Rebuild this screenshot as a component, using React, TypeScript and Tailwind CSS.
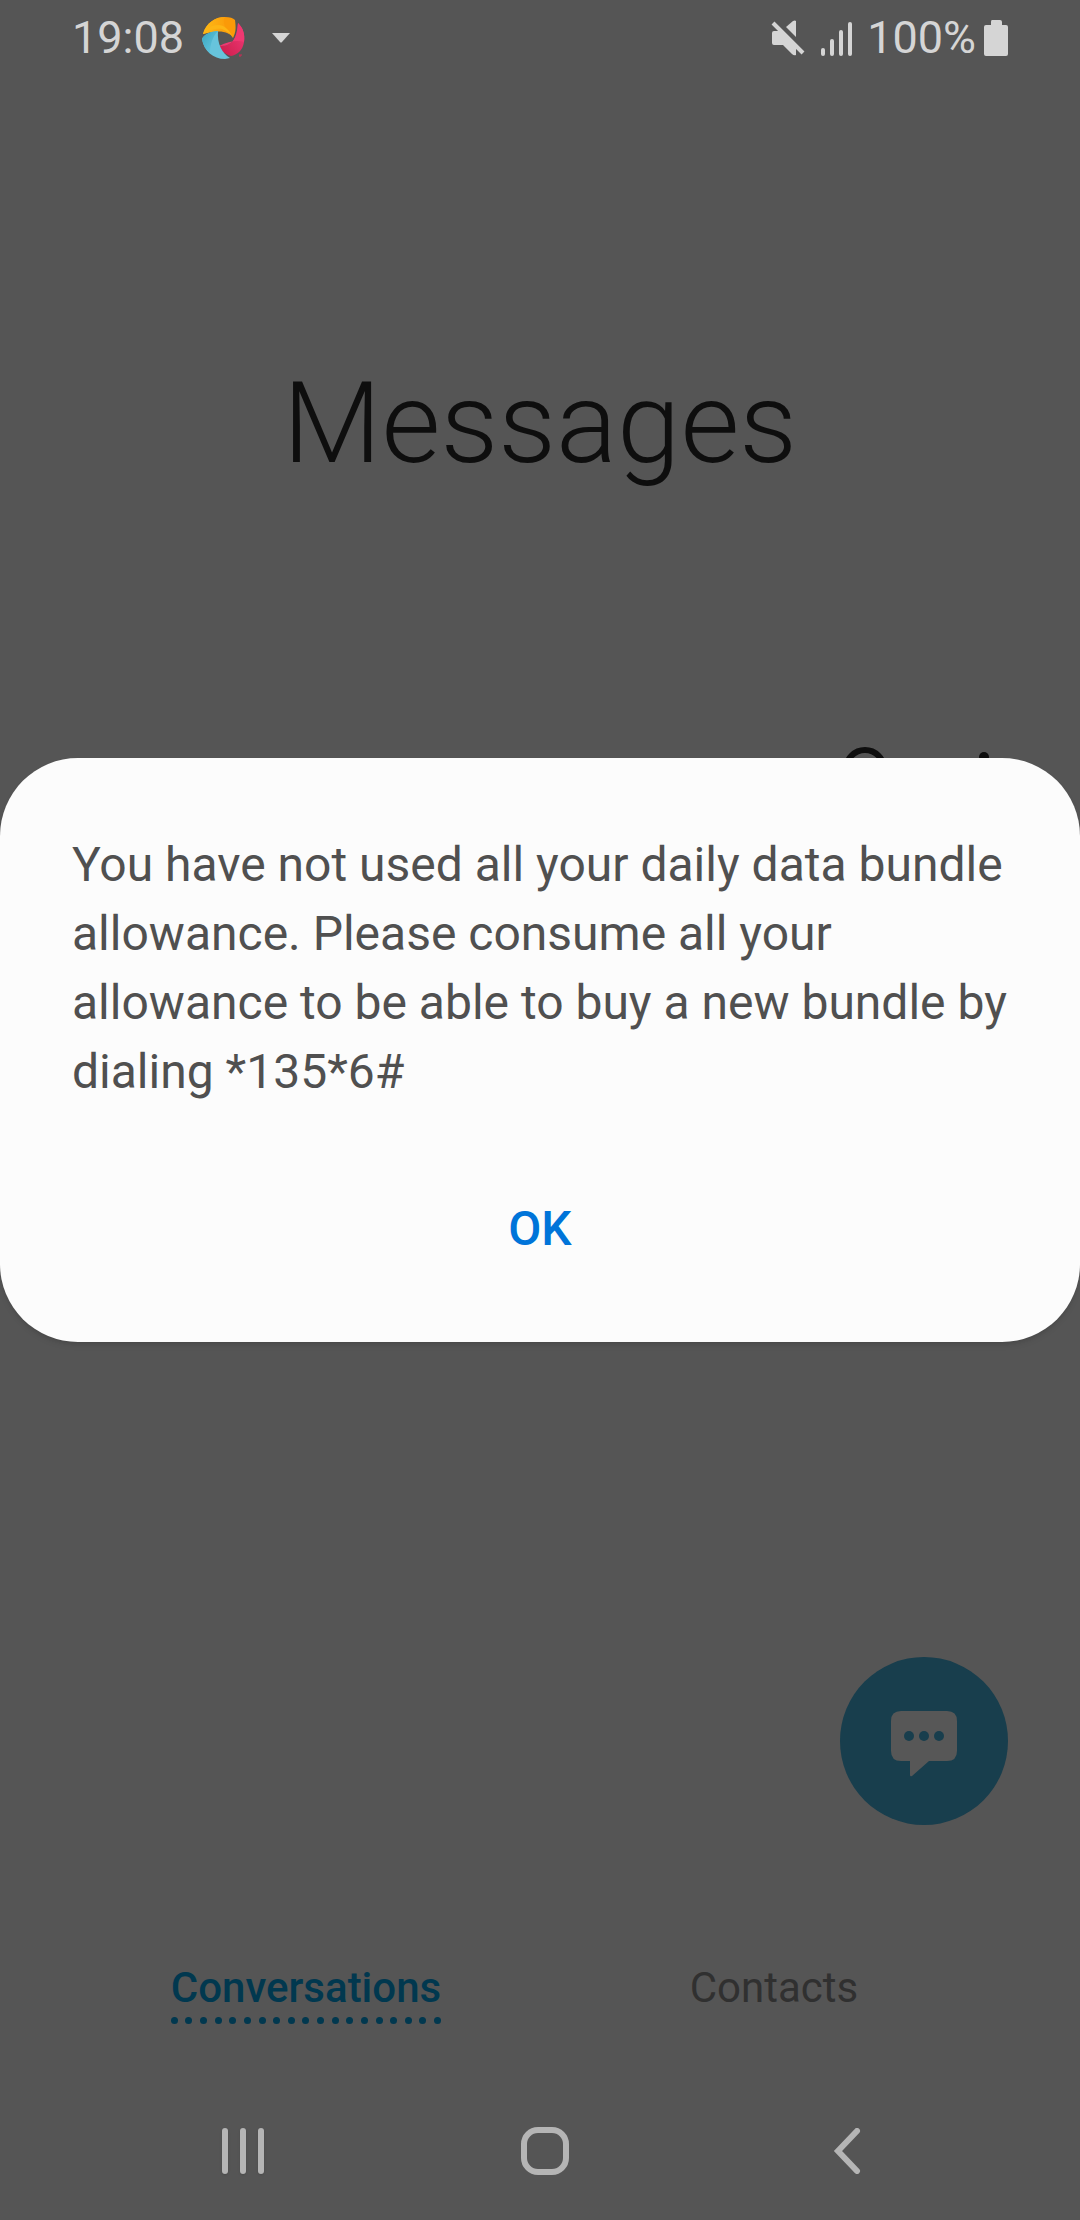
import React from 'react';

function StatusBar() {
  return (
    <header className="flex h-[76px] items-center justify-between px-[72px] text-[45px] leading-[54px] text-[#d5d5d5]">
      <div className="flex items-center">
        <span>19:08</span>
        <svg className="ml-[18px] h-[44px] w-[44px]" viewBox="0 0 44 44" aria-hidden="true">
          <defs>
            <linearGradient id="amber" x1="0" x2="1">
              <stop offset="0" stopColor="#fdbb17" />
              <stop offset="1" stopColor="#fb9608" />
            </linearGradient>
            <linearGradient id="rose" x1="0" y1="1" x2="1" y2="0">
              <stop offset="0" stopColor="#c91c48" />
              <stop offset="1" stopColor="#f33c7b" />
            </linearGradient>
            <linearGradient id="sky" x1="0" y1="0" x2="1" y2="1">
              <stop offset="0" stopColor="#39a5bf" />
              <stop offset="1" stopColor="#6bcbe4" />
            </linearGradient>
          </defs>
          <path d="M1 18C4 7 13 1 23 1C28 1 31 2 33 4C34 12 34 16 31 22C28 15 18 12 1 18Z" fill="#fb9a08" />
          <path d="M1 18C4 7 13 1 23 1C20 5 22 12 31 22C27 16 19 13 1 18Z" fill="url(#amber)" />
          <path d="M1 18C8 13 15 12 20 13C25 15 29 18 31 22C27 13 22 9 16 9C10 9 5 12 1 18Z" fill="#fdb515" />
          <path d="M36 7C41 12 43 18 42 26C41 34 35 39 29 40C23 38 19 35 17 30C30 31 35 23 36 7Z" fill="url(#rose)" />
          <path d="M36 7C41 12 43 18 42 26C36 24 27 25 17 30C30 31 35 23 36 7Z" fill="#f03871" />
          <path d="M16 15C6 16 2 19 0 23C2 35 11 43 23 43L28 42C20 37 15 28 16 15Z" fill="#67c4dc" />
          <path d="M16 15C6 16 2 19 0 23C1 29 4 34 8 37C8 28 11 20 16 15Z" fill="url(#sky)" />
          <path d="M37 39h3M38 39v2" stroke="#d32b57" fill="none" />
        </svg>
        <svg className="ml-[26px] h-[10px] w-[18px]" viewBox="0 0 18 10" aria-hidden="true">
          <path d="M0 0H18L10 9Q9 10 8 9Z" fill="#d5d5d5" />
        </svg>
      </div>
      <div className="flex items-center">
        <svg className="mr-[16px] h-[36px] w-[34px]" viewBox="0 0 34 36" fill="#d5d5d5" aria-label="Sound off">
          <path d="M3 11H11L25 25V35Q23 36 21 34L12 25H3Q1 25 1 23V13Q1 11 3 11Z" />
          <path d="M15 7L22 1Q24 0 25 1V17Z" />
          <path d="M4 1L34 31" stroke="#555" strokeWidth="3" />
          <path d="M2 3L32 33" stroke="#d5d5d5" strokeWidth="4" />
        </svg>
        <svg className="mr-[14px] h-[36px] w-[32px]" viewBox="0 0 32 36" fill="#d5d5d5" aria-label="Signal">
          <rect x="0" y="28" width="4" height="8" rx="2" />
          <rect x="9" y="19" width="4" height="17" rx="2" />
          <rect x="18" y="10" width="4" height="26" rx="2" />
          <rect x="27" y="2" width="4" height="34" rx="2" />
        </svg>
        <span>100%</span>
        <svg className="ml-[8px] h-[36px] w-[24px]" viewBox="0 0 24 36" fill="#d5d5d5" aria-label="Battery">
          <path d="M8 0H16Q18 0 18 2V5H22Q24 5 24 7V34Q24 36 22 36H2Q0 36 0 34V7Q0 5 2 5H7V2Q7 0 8 0Z" />
        </svg>
      </div>
    </header>
  );
}

function Toolbar() {
  return (
    <div className="flex justify-end pr-[48px] text-[#0e0e0e]">
      <button type="button" aria-label="Search" className="flex h-[96px] w-[136px] items-center justify-center">
        <svg className="h-[54px] w-[54px]" viewBox="0 0 54 54" fill="none" stroke="currentColor" strokeWidth="6">
          <circle cx="24" cy="22" r="19" />
          <path d="M38 36L52 50" />
        </svg>
      </button>
      <button type="button" aria-label="More options" className="flex h-[96px] w-[96px] items-center justify-center">
        <svg className="h-[46px] w-[12px]" viewBox="0 0 12 46" fill="currentColor">
          <circle cx="6" cy="6" r="5" />
          <circle cx="6" cy="23" r="5" />
          <circle cx="6" cy="40" r="5" />
        </svg>
      </button>
    </div>
  );
}

const dots = Array.from({ length: 19 }, (_, i) => i);

function Tabs() {
  return (
    <nav className="grid grid-cols-2 px-[72px] text-[42px] leading-[48px]">
      <button type="button" className="justify-self-center font-medium text-[#01384f]">
        Conversations
        <span className="mt-[5px] flex justify-between">
          {dots.map((d) => (
            <span key={d} className="h-[7px] w-[7px] rounded-full bg-[#01384f]" />
          ))}
        </span>
      </button>
      <button type="button" className="self-start justify-self-center text-[#303030]">Contacts</button>
    </nav>
  );
}

function SystemNav() {
  return (
    <footer className="grid h-[138px] grid-cols-3 place-items-center pr-[82px] pl-[92px] text-[#b5b5b5]">
      <button type="button" aria-label="Recent apps" className="flex gap-[12px]">
        <span className="h-[46px] w-[6px] rounded-full bg-current shadow-sm" />
        <span className="h-[46px] w-[6px] rounded-full bg-current shadow-sm" />
        <span className="h-[46px] w-[6px] rounded-full bg-current shadow-sm" />
      </button>
      <button type="button" aria-label="Home" className="h-[48px] w-[48px] rounded-[17px] border-[6px] border-current" />
      <button type="button" aria-label="Back">
        <svg className="h-[46px] w-[28px]" viewBox="0 0 28 46" fill="none" stroke="currentColor" strokeWidth="6" strokeLinecap="round">
          <path d="M24 3L5 23L24 43" />
        </svg>
      </button>
    </footer>
  );
}

function Dialog() {
  return (
    <div className="absolute inset-0 flex items-center pb-[120px]">
      <section
        role="dialog"
        aria-modal="true"
        aria-describedby="message"
        className="w-full rounded-[78px] bg-[#fcfcfc] px-[72px] pt-[72px] pb-[64px] shadow-md"
      >
        <p id="message" className="text-[48px] leading-[69px] text-[#505050]">
          You have not used all your daily data bundle allowance. Please consume all your allowance to be able to buy a
          new bundle by dialing *135*6#
        </p>
        <button type="button" className="mt-[74px] block h-[98px] w-full text-[48px] leading-[56px] font-medium text-[#0074d9]">
          OK
        </button>
      </section>
    </div>
  );
}

export default function App() {
  return (
    <div className="relative flex min-h-screen flex-col bg-[#555] font-['Roboto',sans-serif]">
      <StatusBar />
      <h1 className="mt-[280px] text-center text-[114px] leading-[134px] font-light text-[#0e0e0e]">Messages</h1>
      <div className="mt-[236px]">
        <Toolbar />
      </div>
      <div className="mt-auto flex justify-end px-[72px]">
        <button type="button" aria-label="New message" className="flex h-[168px] w-[168px] items-center justify-center rounded-full bg-[#183e4d]">
          <svg className="mt-[6px] h-[66px] w-[66px]" viewBox="0 0 66 66" aria-hidden="true">
            <path d="M10 0H56Q66 0 66 10V40Q66 50 56 50H38L21 65Q19 66 19 64V50H10Q0 50 0 40V10Q0 0 10 0Z" fill="#575757" />
            <g fill="#183e4d">
              <circle cx="18" cy="25" r="5" />
              <circle cx="33" cy="25" r="5" />
              <circle cx="48" cy="25" r="5" />
            </g>
          </svg>
        </button>
      </div>
      <div className="mt-[139px] mb-[58px]">
        <Tabs />
      </div>
      <SystemNav />
      <Dialog />
    </div>
  );
}
